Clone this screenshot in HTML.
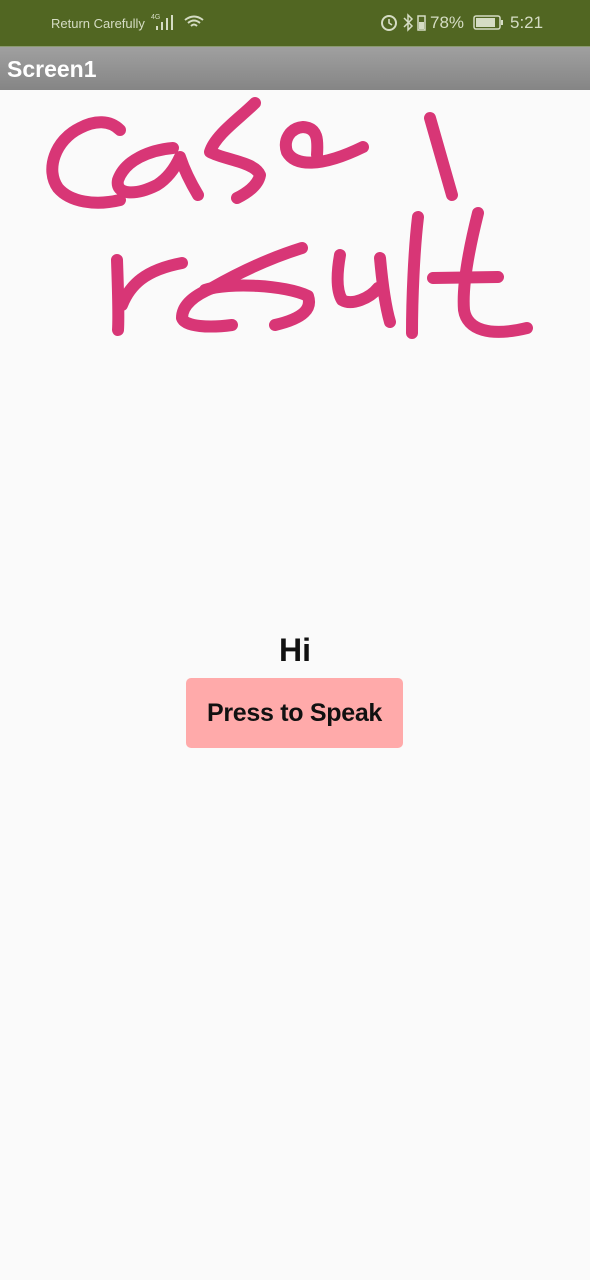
<!DOCTYPE html>
<html><head><meta charset="utf-8"><style>
html,body{margin:0;padding:0;}
body{width:590px;height:1280px;background:#fafafa;position:relative;overflow:hidden;font-family:"Liberation Sans",sans-serif;}
.sb{position:absolute;left:0;top:0;width:590px;height:46px;background:#516622;color:#d5dcc4;}
.sb .l{position:absolute;left:51px;top:16px;font-size:13px;}
.sb .r{position:absolute;left:430px;top:13px;font-size:17px;}
.sb .t{position:absolute;left:510px;top:13px;font-size:17px;}
.ab{position:absolute;left:0;top:46px;width:590px;height:44px;background:linear-gradient(#a0a0a0,#858585);border-top:1px solid #8a9a70;box-sizing:border-box;}
.ab span{position:absolute;left:7px;top:9px;color:#fff;font-size:23px;font-weight:bold;}
.hi{position:absolute;left:0;width:590px;top:632px;text-align:center;font-size:32px;font-weight:bold;color:#111;}
.btn{position:absolute;left:186px;top:678px;width:217px;height:70px;background:#ffaaaa;border-radius:5px;text-align:center;line-height:70px;font-size:25px;font-weight:bold;color:#111;letter-spacing:-0.3px;}
</style></head><body>
<div class="sb"><span class="l">Return Carefully</span>
<svg style="position:absolute;left:150px;top:12px" width="60" height="22" viewBox="0 0 60 22"><text x="1" y="7" font-size="7" fill="#d5dcc4" font-family="Liberation Sans">4G</text><rect x="6" y="14" width="2" height="4" fill="#d5dcc4"/><rect x="11" y="10" width="2" height="8" fill="#d5dcc4"/><rect x="16" y="6" width="2" height="12" fill="#d5dcc4"/><rect x="21" y="3" width="2" height="15" fill="#d5dcc4"/><path d="M35 8 Q44 1 53 8 M38 11 Q44 6 50 11 M41 14 Q44 11 47 14" stroke="#d5dcc4" stroke-width="2" fill="none"/></svg>
<svg style="position:absolute;left:380px;top:12px" width="50" height="22" viewBox="0 0 50 22"><circle cx="9" cy="11" r="7" stroke="#d5dcc4" stroke-width="2" fill="none"/><path d="M9 7v4l3 2" stroke="#d5dcc4" stroke-width="1.6" fill="none"/><path d="M24 6l8 8-4 4V3l4 4-8 8" stroke="#d5dcc4" stroke-width="1.5" fill="none"/><rect x="38" y="4" width="7" height="14" stroke="#d5dcc4" stroke-width="1.5" fill="none"/><rect x="39" y="10" width="5" height="7" fill="#d5dcc4"/></svg>
<span class="r">78%</span>
<svg style="position:absolute;left:473px;top:14px" width="32" height="18" viewBox="0 0 32 18"><rect x="1" y="2" width="26" height="13" rx="2" stroke="#d5dcc4" stroke-width="1.5" fill="none"/><rect x="3" y="4" width="19" height="9" fill="#d5dcc4"/><rect x="28" y="6" width="2" height="5" fill="#d5dcc4"/></svg>
<span class="t">5:21</span></div>
<div class="ab"><span>Screen1</span></div>
<svg style="position:absolute;left:0;top:0" width="590" height="360" viewBox="0 0 590 360" fill="none" stroke="#d83676" stroke-width="12" stroke-linecap="round" stroke-linejoin="round">
<path d="M120 130 C110 120 95 120 80 128 C55 140 45 170 58 188 C70 202 95 206 120 200"/>
<path d="M173 148 C150 150 125 160 118 180 C115 195 135 196 157 185 C168 178 175 168 180 157 C185 172 192 185 198 195"/>
<path d="M255 103 C240 118 215 135 210 152 C225 160 255 162 260 175 C258 186 245 194 237 198"/>
<path d="M317 155 C318 140 318 128 303 127 C290 128 283 140 287 152 C295 166 320 168 363 147"/>
<path d="M430 118 L452 195"/>
<path d="M117 260 C118 290 119 315 118 330 M122 305 C130 285 145 270 182 263"/>
<path d="M302 248 C270 258 240 272 212 288 C195 295 182 305 182 318 C185 327 210 328 232 325"/>
<path d="M205 290 C230 282 285 285 308 296 C312 308 305 318 275 325"/>
<path d="M340 255 C337 272 336 290 342 300 C352 306 370 298 378 288 M380 258 C382 280 385 305 390 322"/>
<path d="M418 217 C414 250 412 300 412 333"/>
<path d="M478 213 C470 245 462 285 464 310 C467 330 490 337 527 328"/>
<path d="M433 278 L498 277"/>
</svg>
<div class="hi">Hi</div>
<div class="btn">Press to Speak</div>
</body></html>
